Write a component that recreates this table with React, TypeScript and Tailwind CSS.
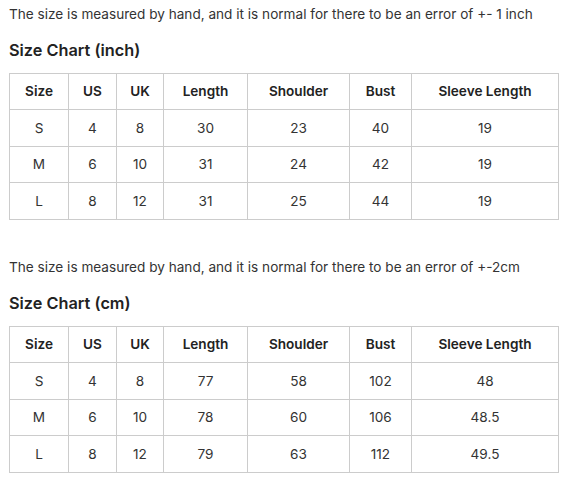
import React from "react";

const widths = [59, 48, 47, 84, 102, 62, 147];
const headers = ["Size", "US", "UK", "Length", "Shoulder", "Bust", "Sleeve Length"];

function Chart({ title, note, rows }: { title: string; note: string; rows: string[][] }) {
  return (
    <div>
      <p className="pt-1 text-[13.6px] leading-[20px] text-[#333]">{note}</p>
      <h2 className="mt-[14px] text-[16.3px] leading-[24px] font-semibold text-[#222]">{title}</h2>
      <table className="mt-[11px] border-collapse table-fixed text-[13.6px] text-[#333]" style={{ width: 550 }}>
        <colgroup>
          {widths.map((w, i) => (
            <col key={i} style={{ width: w }} />
          ))}
        </colgroup>
        <thead>
          <tr className="h-[36px]">
            {headers.map((h) => (
              <th key={h} className="border border-[#cccccc] font-semibold text-center p-0 text-[#222]">
                {h}
              </th>
            ))}
          </tr>
        </thead>
        <tbody>
          {rows.map((r, i) => (
            <tr key={i} className={i % 2 === 0 ? "h-[37px]" : "h-[36px]"}>
              {r.map((c, j) => (
                <td key={j} className="border border-[#cccccc] text-center p-0">
                  {c}
                </td>
              ))}
            </tr>
          ))}
        </tbody>
      </table>
    </div>
  );
}

export default function App() {
  return (
    <div className="w-[569px] h-[479px] bg-white px-[9px]" style={{ fontFamily: "Inter, 'Noto Sans', sans-serif" }}>
      <Chart
        note="The size is measured by hand, and it is normal for there to be an error of +- 1 inch"
        title="Size Chart (inch)"
        rows={[
          ["S", "4", "8", "30", "23", "40", "19"],
          ["M", "6", "10", "31", "24", "42", "19"],
          ["L", "8", "12", "31", "25", "44", "19"],
        ]}
      />
      <div className="h-[33px]" />
      <Chart
        note="The size is measured by hand, and it is normal for there to be an error of +-2cm"
        title="Size Chart (cm)"
        rows={[
          ["S", "4", "8", "77", "58", "102", "48"],
          ["M", "6", "10", "78", "60", "106", "48.5"],
          ["L", "8", "12", "79", "63", "112", "49.5"],
        ]}
      />
    </div>
  );
}
